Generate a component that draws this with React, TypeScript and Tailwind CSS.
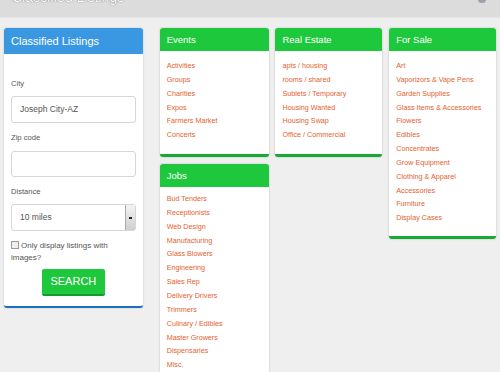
const events = ["Activities", "Groups", "Charities", "Expos", "Farmers Market", "Concerts"];
const realEstate = ["apts / housing", "rooms / shared", "Sublets / Temporary", "Housing Wanted", "Housing Swap", "Office / Commercial"];
const forSale = [
  "Art",
  "Vaporizors & Vape Pens",
  "Garden Supplies",
  "Glass Items & Accessories",
  "Flowers",
  "Edibles",
  "Concentrates",
  "Grow Equipment",
  "Clothing & Apparel",
  "Accessories",
  "Furniture",
  "Display Cases",
];
const jobs = [
  "Bud Tenders",
  "Receptionists",
  "Web Design",
  "Manufacturing",
  "Glass Blowers",
  "Engineering",
  "Sales Rep",
  "Delivery Drivers",
  "Trimmers",
  "Culinary / Edibles",
  "Master Growers",
  "Dispensaries",
  "Misc.",
];

function Card({ title, items, pt = "pt-[8px]", pb = "pb-[12px]" }: { title: string; items: string[]; pt?: string; pb?: string }) {
  return (
    <div className="bg-white rounded-[3px] overflow-hidden shadow-[0_0_2px_rgba(0,0,0,0.25)] border-b-[3px] border-[#17a933]">
      <div className="h-[23px] bg-[#1ec83c] flex items-center pl-[7px] pt-[1px] text-white text-[9.5px]">{title}</div>
      <ul className={`${pt} ${pb} pl-[7px]`}>
        {items.map((item) => (
          <li key={item} className="text-[7.2px] leading-[13.85px] text-[#e4612f] whitespace-nowrap">
            {item}
          </li>
        ))}
      </ul>
    </div>
  );
}

export default function App() {
  return (
    <div className="w-[500px] h-[372px] overflow-hidden bg-[#efefef] font-['Liberation_Sans',Arial,sans-serif]">
      <div className="h-[18px] bg-[#dcdcdc] border-b border-[#e6e6e6] flex justify-between overflow-hidden">
        <div className="ml-[12px] mt-[-11px] text-[14px] leading-[16px] text-white [text-shadow:0_0_1px_#444] whitespace-nowrap">
          Classified Listings
        </div>
        <div className="mr-[14px] mt-[-4px] w-[8px] h-[7px] rounded-full bg-[#9aa3ab]" />
      </div>

      <div className="flex px-[4px] pt-[10px]">
        {/* search panel */}
        <div className="w-[139px] self-start bg-white rounded-[3px] overflow-hidden shadow-[0_0_2px_rgba(0,0,0,0.2)] border-b-[2px] border-[#1b6fc2]">
          <div className="h-[26px] bg-[#3a98e2] flex items-center pl-[7px] pt-[1px] text-white text-[11px]">Classified Listings</div>
          <div className="px-[7px] pt-[24px] pb-[10px] text-[#555]">
            <div className="text-[7.6px] leading-[12px]">City</div>
            <div className="mt-[6px] h-[27px] border border-[#d6d6d6] rounded-[3px] flex items-center pl-[8px] text-[8.5px] text-[#555]">
              Joseph City-AZ
            </div>
            <div className="mt-[9px] text-[7.6px] leading-[12px]">Zip code</div>
            <div className="mt-[7px] h-[26px] border border-[#d6d6d6] rounded-[3px]" />
            <div className="mt-[9px] text-[7.6px] leading-[12px]">Distance</div>
            <div className="mt-[6px] h-[27px] border border-[#d6d6d6] rounded-[3px] flex items-center justify-between pl-[8px] text-[8.5px] text-[#555]">
              <span>10 miles</span>
              <div className="w-[10px] h-full bg-gradient-to-b from-[#f4f4f4] to-[#cfcfcf] border-l border-[#aaa] flex items-center justify-center">
                <div className="w-[3px] h-[2px] bg-[#222]" />
              </div>
            </div>
            <div className="mt-[9px] text-[8px] leading-[12px] text-[#555]">
              <span className="inline-block align-[-1px] w-[8px] h-[8px] border border-[#999] bg-[#eee] mr-[2px]" />
              Only display listings with images?
            </div>
            <div className="mt-[5px] flex justify-center">
              <button className="w-[63px] h-[27px] bg-[#1ec83c] rounded-[2px] border-b-[2px] border-[#159a2d] text-white text-[11px]">
                SEARCH
              </button>
            </div>
          </div>
        </div>

        <div className="ml-[17px] w-[110px] flex flex-col gap-[7px]">
          <Card title="Events" items={events} />
          <Card title="Jobs" items={jobs} pt="pt-[5px]" />
        </div>
        <div className="ml-[6px] w-[107px] self-start">
          <Card title="Real Estate" items={realEstate} />
        </div>
        <div className="ml-[7px] w-[107px] self-start">
          <Card title="For Sale" items={forSale} pb="pb-[11px]" />
        </div>
      </div>
    </div>
  );
}
